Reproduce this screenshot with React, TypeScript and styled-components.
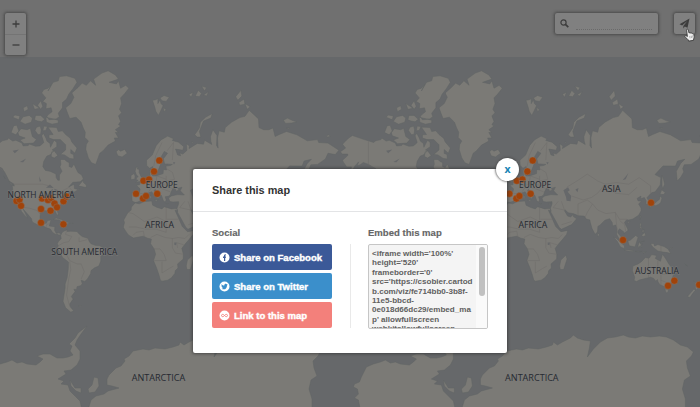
import React from "react";
import styled, { createGlobalStyle } from "styled-components";

const GlobalStyle = createGlobalStyle`
  * { box-sizing: border-box; }
  html, body { margin: 0; padding: 0; overflow: hidden; }
  body { font-family: "Liberation Sans", Arial, Helvetica, sans-serif; }
`;

/* ---------- map data ---------- */

const WORLD = 373.4;
const ORIGIN_X = 141.3;
const EQUATOR_Y = 242.7;

// Coastlines as "lon,lat" pairs, projected with Web Mercator.
const LAND: string[] = [
  // North and Central America
  "-168,65.6 -163,67 -166,68.4 -163,69.5 -160,70.5 -156.5,71.3 -152,70.8 -145,70 -141,69.6 -136,69 -134,69.6 -129,70 -128,70.5 -124,69.5 -121,69.8 -115,68.8 -114,67.8 -109,67.9 -108,68.5 -102,67.7 -98,67.8 -96,68.3 -94,69 -96,71.2 -94.5,72 -92,70.5 -91,69.5 -88,68.7 -87.5,67.3 -85.5,68.8 -84,69.8 -81.5,69 -81.5,67.5 -86,66.3 -84,66 -88,64.3 -91,63.8 -94,61.5 -95,59 -92.5,57 -88,56.5 -82.3,55.1 -82,53 -80.5,51.5 -79,51.5 -79,54.5 -76.5,56.5 -78.5,58.8 -77.5,60 -78,62.3 -74,62.3 -71.5,61.3 -69.5,60.9 -69.5,59 -67,58.5 -65,60.2 -63,58 -61,55.8 -57.5,54.5 -55.8,52.2 -59,50.5 -66,50.2 -70,47.2 -65,49 -64.5,47.5 -64.5,46.2 -61,45.6 -60,46.5 -60.2,45.6 -65.5,43.5 -66,44.8 -70,43.8 -70.6,41.8 -74,40.8 -75.2,38.5 -76.3,39 -75.8,36.5 -77.5,34.5 -81,31.8 -81.3,30 -80,27 -80.6,25.2 -82,27 -83,29 -84.5,30 -89,30.3 -89.5,29 -91.5,29.5 -94.5,29.4 -97.2,27.8 -97.7,24 -97.5,22 -96,19 -94.5,18.2 -91.5,18.5 -90.5,20.8 -87,21.5 -88,18.5 -88.7,15.9 -83.3,15.2 -83.6,12 -82,9 -79.5,9.5 -77,8.5 -77.8,7.5 -80,7.4 -80.5,8.2 -83,8.2 -85.7,10 -87.6,13 -92,14.4 -95,16.1 -99.5,16.7 -104.5,19.2 -105.5,20.5 -105.7,22.4 -109,26 -112.5,29.5 -114.7,31.7 -112.5,28.5 -109.5,23.2 -112,25 -114,27.2 -115.5,28.8 -117.2,32.8 -120.5,34.6 -122.4,37.5 -124.2,40.4 -124,46 -124.6,48.4 -122.4,47.8 -123,49.2 -127.5,51 -130.5,54.8 -134,58 -137,58.8 -141,60 -146,60.9 -148.5,60 -151.8,59.2 -150.5,61.2 -154,59.3 -156.5,57 -162,55 -158,57.5 -157.3,58.8 -162,58.8 -165,60.9 -166,62 -161,64 -161,64.6 -166.3,64.6",
  // Canadian Arctic archipelago
  "-72,83.1 -64,82.8 -62,82.3 -66,81.4 -70,80.6 -72,79.8 -76,79.2 -76,78.2 -80,77.1 -79,76.3 -82,75.8 -89,75.6 -91,76.4 -89,76.9 -86,77.4 -87,78.2 -92,78 -91.5,79 -95,79.4 -92,80 -96,80.8 -94,81.3 -90,81.5 -87,82 -90,81.1 -85,82.3 -80,82.5 -79,83",
  "-80,74.8 -80,75.5 -92,76.2 -91.5,75 -86,74.5",
  "-97,76.6 -93,75.7 -96,75.1 -100,75.3 -103,75.6 -102,76.6",
  "-108,76.6 -105,76 -106,75 -112,74.5 -117,75.2 -114,76.3",
  "-122,76.7 -117,76.5 -118,75.6 -124,76.2",
  "-114,78.2 -110,78.6 -109,77.9 -113,77.4",
  "-105,79 -98,78.1 -103,77.9",
  "-100,78.7 -97,79.5 -95,78.5 -97,77.9",
  "-123,74.1 -120,74.2 -118,72.6 -121,71.5 -125.5,72.2",
  "-116,73.3 -110,73 -107,73.4 -105,71 -101,70 -104,68.8 -113,68.6 -117,69.9 -112,70.5 -118,71.2 -119,72.2",
  "-101,73.7 -97.5,74 -96.5,73 -97,71.7 -99.5,71.5 -102.5,72.8",
  "-94,74 -90.5,73.9 -92,72.8 -95,72.7",
  "-90,73.7 -86,73.7 -81.5,73.6 -80,72.5 -76,72.7 -73,71.6 -68.5,70.4 -67,69.2 -62,67 -64,65 -68,66.4 -68,64.9 -65.3,64.4 -65,62.5 -69,62.8 -74,64.3 -78,64.5 -73,66.3 -73,68.2 -78,70 -84.5,70 -89,70.5 -89,71.5 -85,71.6",
  "-86.5,65.5 -84,66 -80.5,64 -84,62.9 -87,63.6",
  "-60.5,48 -56,51.5 -55.7,50 -53,48.5 -53,46.8 -59,47.7",
  "-127.8,50.8 -123.5,48.5 -125.5,48.8", "-132.8,54 -131.2,52.3",
  // Greenland
  "-73,78.2 -68,79 -65,80.1 -67,80.8 -61,81.6 -57,82.2 -53,81.9 -49,82.5 -44,81.9 -46,82.7 -38,83.4 -32,83.65 -25,83.2 -22,82.7 -31,82.3 -24,82.1 -22,82.5 -20,81.5 -15,81.9 -12,81.5 -16,80.7 -20,80 -19,79 -21,77.9 -19,77.2 -22,76.5 -20,75.2 -22,74.4 -20,74 -25,73 -22,72.2 -25,72.2 -22,70.5 -26,70.5 -25,69.5 -32,68.1 -37,65.9 -40,65 -42.8,61.5 -44,60 -48,60.8 -51,63 -53.5,66.5 -53,68.3 -51,69.5 -54.5,70.7 -54,72.3 -56,73.5 -58,75 -63,76.2 -69,75.9 -71,77",
  "-24.3,65.6 -22,66.4 -20,65.8 -16,66.5 -13.6,65 -18.5,63.4 -22.7,63.9",
  // South America
  "-77.3,8.5 -75.5,10.6 -71.5,12.4 -71.5,10.8 -68,11 -62,10.7 -60,8.5 -57,6 -51.5,4.2 -50,1 -48.5,-1 -44.5,-2.5 -40,-3 -37,-4.9 -35,-7 -35.3,-9.3 -39,-13 -39,-17.5 -41,-22 -45,-23.5 -48.5,-26 -48.8,-28.5 -52,-33 -54.5,-34.9 -58,-34 -57,-36.5 -58,-38.2 -62,-39 -62.3,-41 -65,-41 -63.8,-42.5 -67.5,-46 -65.8,-47.7 -69,-50.8 -68.4,-52.5 -65.2,-54.7 -68,-55.5 -73,-53 -75.5,-49 -74.5,-45 -73.5,-40 -73.5,-37 -71.5,-32 -70.4,-24 -70.3,-18.3 -76,-14 -79.5,-7.5 -81.3,-5 -80,-3 -81,-1 -80,1 -77.2,4 -77.8,7",
  "-61,-51.8 -58,-51.6 -59,-52.2",
  "-85,21.8 -82,23.2 -77,21.7 -74.3,20.2 -77.5,19.9 -79,21.5", "-74.3,18.5 -73,19.9 -68.5,18.6 -71,17.9", "-67.2,18.4 -65.7,18.3 -67,17.9", "-78.3,18.4 -76.3,18 -77.5,17.8",
  // Africa
  "-6,35.8 -2,35.1 3,36.8 10,37.3 11,34 15,32.3 20,31 22,32.8 29,31 32.3,31.2 34.3,31.2 34.9,29.5 32.5,29.9 35.5,24 37.2,20.5 39.5,15.3 43.2,12 44.5,10.5 51.2,11.8 50,8 46,3 42,-1.5 39,-5.5 40.6,-11 40.5,-15.5 35,-20 35.4,-23.8 32.8,-26 32.3,-28.5 29,-32 25.5,-34 20,-34.8 18.4,-34 17,-29.5 14.7,-23.5 11.8,-17 13.8,-11 12.3,-6 9,-1 9.7,3.5 6,4.3 2,6.3 -4,5.2 -7.5,4.4 -12.5,7.5 -15,11 -17.4,14.7 -16.2,19 -17,21.3 -13,27.8 -9.8,30 -9.5,32.5",
  "49.3,-12 50.5,-15.5 47.2,-25 44,-25 43.3,-22 44.4,-16.5",
  // Eurasia
  "-9.3,43.2 -1.8,43.4 -1.2,46 -4.7,48.4 -1.5,48.7 -1.8,49.7 1.5,50.2 4,51.7 5,53.3 8.5,53.8 8.2,57 10.6,57.7 10.8,56 9.8,54.9 11,54 14.2,54 18.5,54.8 21,55.3 21.3,57.5 24.3,57.2 23.7,59.2 28,59.5 30,60 25,60.2 22.5,60.2 21.3,62.6 25.3,65 22.2,65.7 17.3,62 18.5,59.9 16.5,57.2 14.2,55.5 12.8,55.6 11,59 8,58.1 5.2,59.5 5,62 10.5,64.2 14.5,68 19,69.9 25.5,71.1 31,70.3 30,69.7 36,69.1 41,67.5 40,66.2 33,66.6 35,64.3 38,63.9 37,65.1 40,64.6 44,66.1 43.5,68.6 46.5,67.8 46,66.8 54,68.7 60,68.4 61,69.8 68,68.3 67,69.5 66.7,71 69,73 73,71.3 72.5,68 74,67 73.5,70.5 75,72.7 80,72.3 81,73.6 87,75 95,76.1 100,76.4 104,77.7 113,75.8 113.5,73.6 118,73 123,73 127,73.5 129,71 133,71.6 140,72.5 150,71.5 160,69.6 170,70 171,69 180,68.8 190.5,66.2 187,64.4 180,65 177.5,62.5 170,60 163.5,59.8 162,58 163,56.2 160,53.2 156.7,51 155.8,56.5 160,60.5 164,62.4 157,61.6 155,59.2 143,59.3 135.3,54.7 141,53 140.3,48.5 135.5,44 132,43.3 130.5,42.2 127.5,39.7 129.4,37 129.2,35.2 126.5,34.5 126.7,37.5 125,39.8 121.3,39 121.8,40.9 118,39.2 119,37.3 122.4,37.2 119.5,35 121.8,31.8 122,29.5 119.5,25.5 114,22.3 110,21.3 108,21.6 105.8,19 109,13 109,11.5 105,8.7 105,10.5 101,13.3 99.5,11 99.5,9.3 103.2,5 104,1.4 101,3 98.3,8 98.5,13 97.5,16.8 94.4,16 94,19 91.5,22.5 87,21.2 82.3,16.7 80.2,15.5 79.8,10.3 77.5,8.1 74.5,13.5 72.8,19.5 72.5,21.5 69,22.2 67,24.8 61.5,25.1 57,26.8 51.5,27.8 48.5,30.2 48,29.5 51,24.8 54,24.1 56.3,26.2 56.6,24.4 59.8,22.5 55,17.2 45,12.8 43,14.5 39,21.5 35,28 34.9,29.5 34.3,31.2 36,35 36,36.7 30.5,36.5 27.5,36.8 26.2,39.5 29,41.1 35,42 41.5,41.7 37.5,44.7 39.2,47.1 35,46.3 36.5,45.2 33.6,44.4 32.5,46.1 30.8,46.5 28.6,43.8 28,41.8 26,40.8 23,40.4 24,38 23,36.5 21.5,37 19.4,41.5 15,44.5 13.6,45.5 12.4,45 14,42.5 18.5,40.2 16.7,39.9 16,38 15.3,40 12,42 10,44 6.5,43.1 3.2,43.3 3,41.8 0,39.8 0,38.6 -2,36.8 -5.5,36.1 -8.9,37",
  "-5.5,50.1 1.4,51.2 1.6,52.8 0,53.3 -2,55.8 -2,57.6 -4,57.7 -3.2,58.6 -5,58.6 -6,56.5 -4.8,54.7 -3,53.5 -4.5,53 -5,51.8 -3,51.4", "-10,51.7 -6.3,52.2 -6,54 -7,55.3 -10,54.2",
  "8.3,41 9.7,41 9.5,39.2 8.5,39", "8.7,42.5 9.5,42.9 9.3,41.4", "12.5,38 15.5,38.2 15.1,36.7", "23.6,35.4 26.2,35.2 24.8,34.9", "32.4,35 34.5,35.6 33.5,34.6",
  // Arctic islands of Eurasia
  "10.8,79.6 14,79.7 16,79.9 16,79 18,79.7 19,79 21,78.6 18.5,77.5 16.5,76.6 14,77.5 13,78.3", "18,80 22,80.4 27,80.1 24,79.4 20,79.5", "21,78.3 24,77.8 22,77.4",
  "46,80.6 50,80.9 48,80.1", "52,80.3 55,81.2 58,80.7 56,80.2", "58,81.8 63,81.6 61,81.1", "60,80.5 65,81 63,80.3",
  "51.5,71.5 56,73.5 57,75 62,76.2 68.5,77 67,76 60,75.3 56,72.5 57.5,70.8 54,70.8",
  "91,80.2 96,81.2 97,80.3 93,79.6", "94,79.2 99,79.8 100,78.9 95,78.7", "100,79 105,78.4 102,77.9",
  "137,75.5 141,76 146,75.4 150,75.1 145,74.8 139,74.7", "140,73.5 143,73.5 142,73.2", "178.5,71.2 181,71.5 182,71 179,70.8", "48.5,69.4 50,69 49,68.7",
  // Asian islands
  "142,54.2 143.5,52 144.5,49 142.8,46 142,48", "140,42.3 141.7,45.4 145.3,43.3 143.3,42", "130.2,33.5 135.5,35.6 137,37 139.5,38.5 140.2,41 142,39.5 140.8,36 139,34.8 136,33.6 133,34.2 131.8,34 130.5,31.2",
  "121,25 122,24.8 121,22", "108.7,19.8 111,20 109.5,18.3", "80,9.6 81.8,7.5 80.5,6 79.8,7.5",
  "120.5,18.5 122.2,18.4 121.5,15 124,13 120.7,14", "122,11.5 125,12.2 124,10", "122,7 125.3,9.7 126.3,7 124,6",
  "95.3,5.5 98,4.2 103.5,-1 106,-3.2 105.6,-5.8 102,-4 98.7,1.5", "105.2,-6.8 108.5,-6.7 114.4,-7.6 114.4,-8.6 108,-7.8", "109,1.5 111.5,2.5 116.7,7 119,5.2 117.6,1 116,-4 110.5,-3", "119.5,-5.5 119,-2.8 120,0.8 125,1.5 120.5,.4 121,-1 123.3,-1 121.5,-2 122.5,-4.8 120.7,-3", "131,-.8 134,-.8 135,-3.2 138,-1.7 144,-3.8 147.8,-6 150.5,-10.4 147,-9.5 143,-9 138,-8 133,-4 132,-2.7", "116,-8.4 122.8,-8.4 119,-8.9", "124,-9.2 127,-8.5 124,-10.2", "149,-6 152.2,-4.4 150.5,-6.2",
  // Australia and New Zealand
  "142.5,-10.8 145.4,-15 149,-20.5 153,-25 153.2,-29 150.2,-36.8 146.2,-39 143.5,-38.7 140,-37.5 138.3,-35.5 137.6,-33.5 136,-34.8 134,-32.5 131,-31.5 124,-33 120,-33.9 117.5,-35 115,-34.2 115.7,-31.5 113.5,-26 114,-22 119,-20 122.2,-18 126,-14 129.5,-14.9 132,-11.4 136.8,-12.2 135.6,-15 140.5,-17.6",
  "144.7,-40.8 148.3,-40.9 147.8,-43 146,-43.5", "172.7,-34.5 175.5,-37 178.5,-37.8 176.8,-40 175,-41.5 174,-39.3 174.8,-38", "172.8,-40.7 174.2,-41.6 171,-44.5 169,-46.6 166.5,-46", "164,-20.2 167,-22.2",
];

const WATER: string[] = [
  "47,45 51.5,47 53,45 51,44 54.5,41 53.8,37 50,37.4 49.5,40.2",
  "58.5,45.5 61.5,46.5 60.5,43.7", "31.8,.3 34,.3 33.5,-2.5 31.8,-2",
  "-92,46.7 -88,48.8 -84.5,46.6 -88,46.7", "-87.8,42 -86.5,41.8 -85,45.8 -87.5,45", "-83,42.2 -79,42.8 -82.5,41.5", "-84,46 -80,45 -81.5,43.3 -83.5,44.8", "-79.5,43.3 -76.3,44 -78,43.3",
  "-117,61.2 -111,62.8 -114,61", "-124,66 -118,66.5 -122,65", "-98.5,53.8 -96.5,51 -98,50.5", "104,51.5 109.5,55.5 107,52", "30.5,61 32.8,61 31.5,60",
];

const BORDERS: string[] = [
  "-123,49 -95,49 -89,48", "-83,42 -79,43 -75,45 -69.5,47 -67,45", "-141,69.5 -141,60 -131,56", "-117,32.6 -108,31.5 -101,29.8 -97,26", "-92,14.6 -91,17.5 -89,17.8",
  "-72,12 -73,8 -67,6 -70,1 -75,0 -80,-3", "-70,-4 -73,-10 -69,-17 -62,-20 -58,-20 -55,-27 -58,-33", "-69,-18 -68,-25 -70,-33 -72,-45 -69,-52",
  "-60,5 -60,1 -52,3", "-13,28 -8,27 3,20 12,23 15,24 24,20 24,32", "25,22 36,22", "-12,15 -5,15 4,13 14,13 24,10 24,20", "-8,7 -5,10 2,11 3,6", "9,5 15,8 23,5 30,4 36,5 42,4 46,8", "30,4 30,-5 33,-10 40,-11", "12,-6 18,-6 22,-11 24,-17 12,-17", "20,-18 20,-28 27,-24 31,-22", "35,-5 34,0 41,-2",
  "24,58 30,56 32,52 24,51 24,54", "7,54 6,50 8,48 14,49 15,54 24,52", "20,49 26,48 30,46", "-1.5,43 3,42.4", "7,44 10,47 16,47 20,46 28,44", "25,66 31,69 30,62", "12,59 14,64 20,69",
  "50,47 60,51 70,55 80,51 87,49 98,50 110,49 120,53 131,48 131,43", "87,49 97,43 110,42 118,47", "55,41 66,38 74,40 80,43 87,49", "61,25 61,35 70,38 75,35 70,28 68,24", "75,35 80,30 88,27 97,28 101,22 108,22", "45,37 48,30 37,32 42,37", "45,17 55,20", "97,28 98,20 99,10", "101,21 106,17 107,11", "141,-3 141,-9", "129,-15 129,-32", "138,-17 138,-26 141,-26 141,-38", "141,-29 153,-29", "141,-34 150,-37",
];

const project = (pair: string): string => {
  const [lon, lat] = pair.split(",").map(Number);
  const x = ORIGIN_X + (lon / 360) * WORLD;
  const y = EQUATOR_Y - (WORLD / (2 * Math.PI)) * Math.log(Math.tan(Math.PI / 4 + (lat * Math.PI) / 360));
  return `${x.toFixed(1)} ${y.toFixed(1)}`;
};
const line = (s: string) => "M" + s.split(" ").map(project).join("L");
const shape = (s: string) => line(s) + "Z";

const landPath = LAND.map(shape).join("");
const waterPath = WATER.map(shape).join("");
const borderPath = BORDERS.map(line).join("");

// Antarctica runs off the bottom of the viewport, so it is kept in map pixels.
const ANTARCTICA =
  "M-13 410L-15 400-19 398-15 394-16 389-20 387-19 384-14 382-12 377-7 367 0 364 7 362 12 360 17 363 22 362 27 364 36 365 40 362 43 359 37 356 43 354 50 354 57 358 63 358 68 357 73 355 70 351 72 346 69 344 75 338 78 333 87 326 81 334 77 340 75 345 80 351 80 359 77 365 71 370 64 371 66 374 58 379 64 381 61 384 68 385 70 391 75 396 80 401 82 410Z" +
  "M88 410L91 400 96 396 104 394 108 391 119 388 112 386 107 385 107 379 109 375 116 368 121 366 125 361 124 359 129 356 133 351 143 349 149 350 155 348 165 349 173 347 179 345 180 342 184 345 189 342 197 338 200 335 204 338 210 340 217 341 216 348 214 357 220 349 227 342 234 338 242 337 250 335 255 337 262 338 269 336 277 337 286 336 293 337 300 340 307 345 314 347 320 352 318 356 313 361 314 368 317 376 311 380 309 389 312 399 312 410Z" +
  "M94 377L98 378 99 386 95 392 89 393 88 389 92 385Z M70 380L75 388 81 388 81 393 76 391 71 386Z";

const POINTS: [number, number][] = [
  [16.5, 201], [21, 205.8], [19.5, 199.5], [42, 198.5], [48, 200], [51, 198], [54.5, 203.5], [57, 207.3], [41, 209], [50.5, 210.7], [63.5, 201.3], [66.5, 196.5], [41, 222.7], [63.4, 224.3],
  [159.3, 160.5], [154, 171.4], [143.5, 180.8], [149, 179.5], [136, 193.7], [143, 198.6], [146, 196], [157.2, 193.8],
  [277.6, 202.7], [249.6, 240], [294.6, 285.7], [301, 280.7], [325.8, 284.8],
];

const LABELS: { text: string; x: number; y: number; width: number }[] = [
  { text: "NORTH AMERICA", x: 7.6, y: 198.4, width: 67 },
  { text: "SOUTH AMERICA", x: 51.3, y: 255.4, width: 66 },
  { text: "EUROPE", x: 145.7, y: 187.6, width: 32 },
  { text: "AFRICA", x: 145, y: 227.7, width: 29 },
  { text: "ASIA", x: 228.6, y: 192, width: 18.5 },
  { text: "AUSTRALIA", x: 261.5, y: 274.4, width: 44 },
  { text: "ANTARCTICA", x: 131.7, y: 381.2, width: 53.5 },
];

/* ---------- styled parts ---------- */

const Screen = styled.main`
  position: relative;
  width: 700px;
  height: 407px;
  overflow: hidden;
  background: #707070;
`;

const MapCanvas = styled.svg`
  position: absolute;
  inset: 0;
  display: block;
`;

const MapLabel = styled.text`
  font: 500 9.7px "Open Sans", "Noto Sans", sans-serif;
  fill: #252930;
  stroke: #7b7b79;
  stroke-width: 1.4px;
  stroke-opacity: 0.65;
  paint-order: stroke;
`;

const Controls = styled.div`
  position: relative;
  display: flex;
  align-items: flex-start;
  padding: 13px 5px 0;
`;

const ControlBox = styled.div<{ $width: number; $height: number }>`
  display: flex;
  flex-shrink: 0;
  align-items: center;
  width: ${(p) => p.$width}px;
  height: ${(p) => p.$height}px;
  border-radius: 2px;
  background: #808080;
  box-shadow: 0 0 3px 1px #4a4a4a;
  color: #3d3d3d;
`;

const ZoomBox = styled(ControlBox)`
  flex-direction: column;
  margin-right: auto;
`;

const ZoomButton = styled.button`
  display: grid;
  place-items: center;
  width: 100%;
  height: 21px;
  padding: 0;
  border: 0;
  background: none;
  color: inherit;
  & + & { border-top: 1px solid #747474; }
`;

const SearchBox = styled(ControlBox)`
  gap: 7px;
  margin-right: 16px;
  padding: 0 6px 0 5px;
`;

const SearchField = styled.input`
  width: 76px;
  height: 12px;
  padding: 0;
  border: 0;
  border-bottom: 1px dotted #6a6a6a;
  background: transparent;
  outline: 0;
`;

const ShareBox = styled(ControlBox)`
  justify-content: center;
`;

const Cursor = styled.svg`
  position: absolute;
  left: 684px;
  top: 28px;
`;

const Dialog = styled.section`
  position: absolute;
  left: 193px;
  top: 169px;
  width: 314px;
  height: 184px;
  border-radius: 2px;
  background: #fff;
  box-shadow: 0 0 3px 1px rgba(45, 45, 45, 0.6);
`;

const DialogHeader = styled.header`
  display: flex;
  align-items: center;
  height: 43px;
  padding: 0 19px;
  border-bottom: 1px solid #e3e4e6;
`;

const Title = styled.h1`
  margin: 0;
  font-size: 10.9px;
  font-weight: 700;
  color: #333;
`;

const Close = styled.button`
  position: absolute;
  right: -12px;
  top: -11px;
  display: grid;
  place-items: center;
  width: 23px;
  height: 23px;
  padding: 0 0 2px;
  border: 0;
  border-radius: 50%;
  background: #fff;
  box-shadow: 0 0 2px 1px rgba(70, 70, 70, 0.65);
  color: #1985b5;
  font: 700 10.5px "Open Sans", sans-serif;
`;

const DialogBody = styled.div`
  display: flex;
  padding: 15px 19px 0;
`;

const Column = styled.div`
  width: 120px;
`;

const Heading = styled.h2`
  height: 12px;
  margin: 0 0 5px;
  font-size: 9.55px;
  line-height: 11px;
  color: #666;
  -webkit-text-stroke: 0.15px #666;
  white-space: nowrap;
`;

const Divider = styled.div`
  width: 1px;
  height: 84px;
  margin: 17px 17px 0 18px;
  background: #e9e9e9;
`;

const ButtonList = styled.div`
  display: grid;
  gap: 3px;
`;

const ShareButton = styled.button<{ $color: string }>`
  display: flex;
  align-items: center;
  gap: 4px;
  width: 120px;
  height: 26px;
  padding: 0 0 0 7px;
  border: 0;
  border-radius: 2px;
  background: ${(p) => p.$color};
  color: #fff;
  font: 700 9.55px "Liberation Sans", Arial, sans-serif;
  -webkit-text-stroke: 0.4px #fff;
  white-space: nowrap;
`;

const EmbedField = styled.div`
  display: flex;
  justify-content: space-between;
  width: 120px;
  height: 85px;
  overflow: hidden;
  border: 1px solid #c6c6c6;
  border-radius: 2px;
  background: #f4f4f4;
`;

const EmbedCode = styled.code`
  padding: 4px 0 0 3px;
  font: 700 8.05px/9.4px "Liberation Sans", Arial, sans-serif;
  color: #606060;
  white-space: pre;
`;

const ScrollTrack = styled.div`
  width: 11px;
  flex-shrink: 0;
  padding: 2px 2px 0 3px;
  background: #fafafa;
`;

const ScrollThumb = styled.div`
  width: 6px;
  height: 49px;
  border-radius: 3px;
  background: #c1c1c1;
`;

/* ---------- drawings ---------- */

const WorldMap = () => (
  <MapCanvas width="700" height="407" viewBox="0 0 700 407">
    <rect y="57" width="700" height="350" fill="#66686a" />
    <defs>
      <g id="world">
        <path d={landPath + ANTARCTICA} fill="#7b7a76" stroke="#606465" strokeWidth="0.5" strokeLinejoin="round" />
        <path d={waterPath} fill="#66686a" />
        <path d={borderPath} fill="none" stroke="#6e6d6b" strokeWidth="0.5" />
      </g>
      <g id="overlay">
        {POINTS.map(([x, y]) => (
          <circle key={`${x}-${y}`} cx={x} cy={y} r="3.5" fill="#a0430a" stroke="#8a7668" strokeWidth="0.4" />
        ))}
        {LABELS.map((l) => (
          <MapLabel key={l.text} x={l.x} y={l.y} textLength={l.width} lengthAdjust="spacingAndGlyphs">
            {l.text}
          </MapLabel>
        ))}
      </g>
    </defs>
    {[-WORLD, 0, WORLD, WORLD * 2].map((x) => <use key={x} href="#world" x={x} />)}
    {[0, WORLD].map((x) => <use key={x} href="#overlay" x={x} />)}
  </MapCanvas>
);

const FacebookIcon = () => (
  <svg width="11" height="11" viewBox="0 0 11 11">
    <circle cx="5.5" cy="5.5" r="5" fill="#fff" />
    <path d="M5 9V5.9H4V4.6h1v-.8C5 2.7 5.6 2.1 6.8 2.2v1.2c-.5 0-.6.1-.6.5v.7h.7l-.1 1.3h-.6V9z" fill="#3b5998" />
  </svg>
);

const TwitterIcon = () => (
  <svg width="11" height="11" viewBox="0 0 11 11">
    <circle cx="5.5" cy="5.5" r="5" fill="#fff" />
    <path d="M2.5 3.2c.8.9 1.7 1.3 2.8 1.3 0-1.2.6-1.7 1.4-1.7.4 0 .8.2 1 .5l.9-.3-.6.8.7-.1-.7.7C8 6.8 6.7 8.3 4.8 8.3c-.8 0-1.6-.2-2.2-.6.7 0 1.2-.2 1.6-.5-.6-.1-1-.4-1.2-.9h.5c-.6-.3-1-.7-1-1.3l.5.1c-.5-.5-.8-1.1-.5-1.9z" fill="#3b8fcb" />
  </svg>
);

const LinkIcon = () => (
  <svg width="11" height="11" viewBox="0 0 11 11">
    <circle cx="5.5" cy="5.5" r="5" fill="#fff" />
    <path d="M5.5 5.5C4.5 4 2.5 4 2.5 5.5s2 1.5 3 0 3-1.5 3 0-2 1.5-3 0z" fill="none" stroke="#f3807b" strokeWidth="0.9" />
  </svg>
);

const EMBED_CODE = `<iframe width='100%'
height='520'
frameborder='0'
src='https://csobier.cartod
b.com/viz/fe714bb0-3b8f-
11e5-bbcd-
0e018d66dc29/embed_ma
p' allowfullscreen
webkitallowfullscreen`;

export default function App() {
  return (
    <>
      <GlobalStyle />
      <Screen>
        <WorldMap />
        <Controls>
          <ZoomBox $width={21} $height={42}>
            <ZoomButton aria-label="Zoom in">
              <svg width="8" height="8" viewBox="0 0 8 8"><path d="M.5 4h7M4 .5v7" stroke="currentColor" strokeWidth="1.3" /></svg>
            </ZoomButton>
            <ZoomButton aria-label="Zoom out">
              <svg width="8" height="8" viewBox="0 0 8 8"><path d="M.5 4h7" stroke="currentColor" strokeWidth="1.3" /></svg>
            </ZoomButton>
          </ZoomBox>
          <SearchBox $width={103} $height={21}>
            <svg width="9" height="9" viewBox="0 0 9 9" fill="none" stroke="currentColor">
              <circle cx="3.5" cy="3.5" r="2.6" strokeWidth="1.2" />
              <path d="M5.4 5.4L8.3 8.2" strokeWidth="1.7" />
            </svg>
            <SearchField aria-label="Search" />
          </SearchBox>
          <ShareBox $width={21} $height={21}>
            <svg width="11" height="11" viewBox="0 0 11 11"><path d="M10.5.5L.5 6.3l2.6 1.2L8.3 3 4.3 8v2.5l1.5-1.9 2.7 1.1z" fill="currentColor" /></svg>
          </ShareBox>
        </Controls>
        <Cursor width="12" height="14" viewBox="0 0 12 14">
          <path d="M2.6 2.2C2.4.7 4 .7 4.3 2l.7 3 .5-.2c.6-.2 1 0 1.3.4.6-.3 1.1-.1 1.4.4.9-.3 1.4.1 1.6.9l.4 2.1c.2 1-.3 1.500-.5 2.200l-.2 1.500-4.800.8c-.3-1.300-1-1.900-1.900-2.700L1.100 9c-.9-1 0-1.900 1.100-1.200l1.200.7z" fill="#eee" stroke="#303030" strokeWidth="0.8" />
          <path d="M5.7 8l.4 2.3M7.2 7.7l.4 2.3M8.6 7.5l.4 2.2" stroke="#777" strokeWidth="0.5" />
        </Cursor>

        <Dialog>
          <DialogHeader><Title>Share this map</Title></DialogHeader>
          <Close aria-label="Close">x</Close>
          <DialogBody>
            <Column>
              <Heading>Social</Heading>
              <ButtonList>
                <ShareButton $color="#3b5998"><FacebookIcon />Share on Facebook</ShareButton>
                <ShareButton $color="#3b8fcb"><TwitterIcon />Share on Twitter</ShareButton>
                <ShareButton $color="#f3807b"><LinkIcon />Link to this map</ShareButton>
              </ButtonList>
            </Column>
            <Divider />
            <Column>
              <Heading>Embed this map</Heading>
              <EmbedField>
                <EmbedCode>{EMBED_CODE}</EmbedCode>
                <ScrollTrack><ScrollThumb /></ScrollTrack>
              </EmbedField>
            </Column>
          </DialogBody>
        </Dialog>
      </Screen>
    </>
  );
}
